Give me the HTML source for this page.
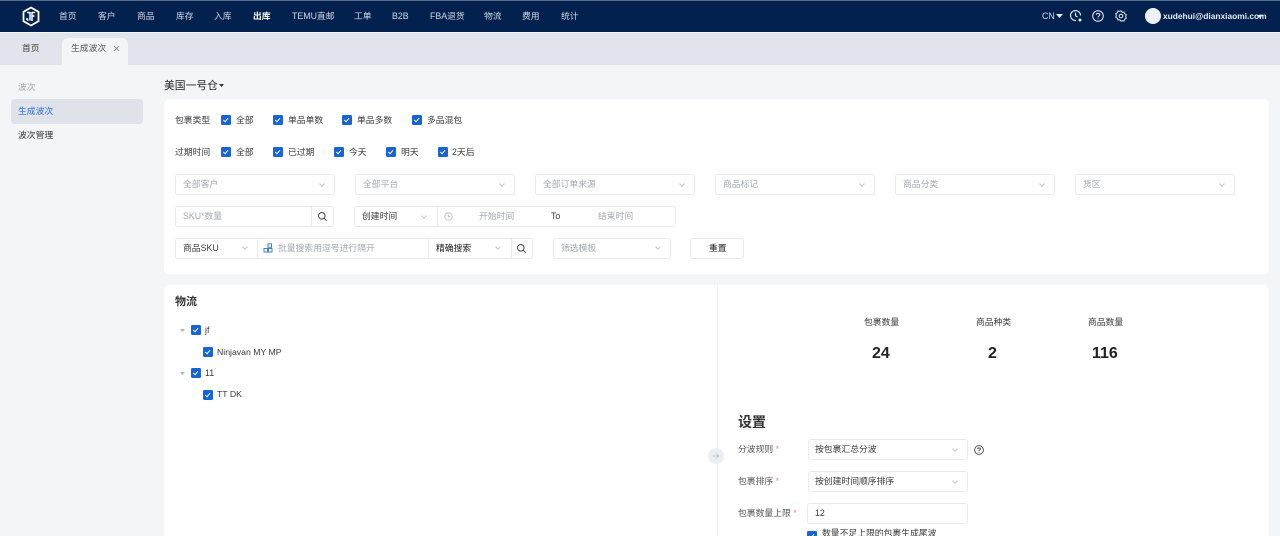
<!DOCTYPE html>
<html lang="zh">
<head>
<meta charset="utf-8">
<title>生成波次</title>
<style>
html{margin:0;padding:0;width:1280px;height:536px;overflow:hidden}
body{margin:0;padding:0;width:1280px;height:536px;overflow:hidden;position:relative;background:#f3f5f7;font-family:"Liberation Sans","Noto Sans CJK SC",sans-serif;font-size:8.8px;color:#3a3a3a}
div,span.a,svg{position:absolute}
.t{position:absolute;white-space:nowrap;line-height:14px;height:14px}
.n{color:#d3d9e4;top:9px}
.g{color:#a4a8ae}
.b{background:#fff;border:1px solid #e8eaee;border-radius:3px;box-sizing:border-box}
.c{width:10px;height:10px;background:#1664d9;border-radius:1.5px}
.c:after{content:"";position:absolute;left:3.4px;top:1.6px;width:2.2px;height:4.4px;border:solid #fff;border-width:0 1.1px 1.1px 0;transform:rotate(40deg)}
.v{width:3px;height:3px;border:solid #c2c5cb;border-width:0 1px 1px 0;transform:rotate(45deg)}
.l{background:#e8eaee;width:1px}
</style>
</head>
<body>
<!-- header -->
<div style="left:0;top:0;width:1280px;height:32px;background:#02214f"></div>
<div style="left:0;top:0;width:1280px;height:1px;background:#52688a"></div>
<svg style="left:21px;top:6px" width="20" height="21" viewBox="0 0 20 21"><path d="M10 1.500l7.500 4.300v9.400L10 19.500l-7.500-4.300V5.800z" fill="#02214f" stroke="#fff" stroke-width="1.800"/><path d="M9 6v8.500M6 6.500h3M6 14h1.500M6 14v-2M11 6v9M11 6.500h3.200M11 10h2.600" stroke="#fff" stroke-width="1.500" fill="none"/></svg>
<span class="t n" style="left:59px">首页</span>
<span class="t n" style="left:98px">客户</span>
<span class="t n" style="left:137px">商品</span>
<span class="t n" style="left:176px">库存</span>
<span class="t n" style="left:214px">入库</span>
<span class="t n" style="left:253px;color:#fff;font-weight:bold">出库</span>
<span class="t n" style="left:292px">TEMU直邮</span>
<span class="t n" style="left:354px">工单</span>
<span class="t n" style="left:392px">B2B</span>
<span class="t n" style="left:430px">FBA退货</span>
<span class="t n" style="left:484px">物流</span>
<span class="t n" style="left:522px">费用</span>
<span class="t n" style="left:561px">统计</span>
<span class="t n" style="left:1042px">CN</span>
<svg style="left:1056px;top:14px" width="8" height="5"><path d="M0 0h7L3.500 4z" fill="#e8ebf0"/></svg>
<svg style="left:1069px;top:9px" width="14" height="14" viewBox="0 0 14 14" fill="none" stroke="#e8ebf0" stroke-width="1.100"><path d="M11.500 6.500A5 5 0 1 0 7 11.500M6.500 3.500v3.200l2 1.300"/><circle cx="11" cy="11" r="1.500" fill="#e8ebf0" stroke="none"/></svg>
<svg style="left:1092px;top:10px" width="12" height="12" viewBox="0 0 12 12" fill="none" stroke="#e8ebf0"><circle cx="6" cy="6" r="5.300"/><path d="M4.300 4.800C4.300 2.900 7.800 2.900 7.800 4.800 7.800 6 6 6 6 7.300"/><path d="M6 8.300v1"/></svg>
<svg style="left:1115px;top:10px" width="12" height="12" viewBox="0 0 12 12" fill="none" stroke="#e8ebf0"><path d="M6 .8l1.200 1.400 1.800-.2.600 1.800 1.600.8-.5 1.900.5 1.900-1.600.8-.6 1.800-1.800-.2L6 11.200 4.800 9.800l-1.800.2-.6-1.800-1.600-.8.500-1.900-.5-1.900L2.400 2.800 3 1l1.800.2z"/><circle cx="6" cy="6" r="1.800"/></svg>
<div style="left:1145px;top:8px;width:16px;height:16px;border-radius:50%;background:#eef1f6"></div>
<span class="t" style="left:1163px;top:9px;color:#e8ebf0;font-size:8.400px;font-weight:bold">xudehui@dianxiaomi.com</span>
<svg style="left:1257px;top:15px" width="6" height="4"><path d="M0 0h6L3 3z" fill="#e8ebf0"/></svg>
<!-- tabs -->
<div style="left:0;top:33px;width:1280px;height:32px;background:#e1e4ec"></div>
<div style="left:62px;top:38px;width:66px;height:27px;background:#f3f5f7;border-radius:6px 6px 0 0"></div>
<span class="t" style="left:22px;top:41px;color:#444">首页</span>
<span class="t" style="left:71px;top:41px;color:#555">生成波次</span>
<svg style="left:113px;top:45px" width="7" height="7"><path d="M1 1l5 5M6 1L1 6" stroke="#777" stroke-width=".8"/></svg>
<!-- sidebar -->
<span class="t" style="left:18px;top:80px;color:#a4a8ae">波次</span>
<div style="left:11px;top:99px;width:132px;height:25px;background:#dfe2e9;border-radius:4px"></div>
<span class="t" style="left:18px;top:104px;color:#2f6fd6">生成波次</span>
<span class="t" style="left:18px;top:128px;color:#333">波次管理</span>
<!-- title -->
<span class="t" style="left:164px;top:79px;font-size:10.800px;color:#222">美国一号仓</span>
<svg style="left:219px;top:84px" width="6" height="4"><path d="M0 0h5L2.500 3z" fill="#333"/></svg>
<!-- filter card -->
<div style="left:164px;top:99px;width:1105px;height:175px;background:#fff;border-radius:5px"></div>
<span class="t" style="left:175px;top:113px">包裹类型</span>
<div class="c" style="left:221px;top:115px"></div><span class="t" style="left:236px;top:113px">全部</span>
<div class="c" style="left:273px;top:115px"></div><span class="t" style="left:288px;top:113px">单品单数</span>
<div class="c" style="left:342px;top:115px"></div><span class="t" style="left:357px;top:113px">单品多数</span>
<div class="c" style="left:412px;top:115px"></div><span class="t" style="left:427px;top:113px">多品混包</span>
<span class="t" style="left:175px;top:145px">过期时间</span>
<div class="c" style="left:221px;top:147px"></div><span class="t" style="left:236px;top:145px">全部</span>
<div class="c" style="left:273px;top:147px"></div><span class="t" style="left:288px;top:145px">已过期</span>
<div class="c" style="left:334px;top:147px"></div><span class="t" style="left:349px;top:145px">今天</span>
<div class="c" style="left:386px;top:147px"></div><span class="t" style="left:401px;top:145px">明天</span>
<div class="c" style="left:438px;top:147px"></div><span class="t" style="left:452px;top:145px">2天后</span>
<!-- row 3 -->
<div class="b" style="left:175px;top:174px;width:160px;height:21px"></div><span class="t g" style="left:183px;top:177px">全部客户</span><div class="v" style="left:320px;top:182px"></div>
<div class="b" style="left:355px;top:174px;width:160px;height:21px"></div><span class="t g" style="left:363px;top:177px">全部平台</span><div class="v" style="left:500px;top:182px"></div>
<div class="b" style="left:535px;top:174px;width:160px;height:21px"></div><span class="t g" style="left:543px;top:177px">全部订单来源</span><div class="v" style="left:680px;top:182px"></div>
<div class="b" style="left:715px;top:174px;width:160px;height:21px"></div><span class="t g" style="left:723px;top:177px">商品标记</span><div class="v" style="left:860px;top:182px"></div>
<div class="b" style="left:895px;top:174px;width:160px;height:21px"></div><span class="t g" style="left:903px;top:177px">商品分类</span><div class="v" style="left:1040px;top:182px"></div>
<div class="b" style="left:1075px;top:174px;width:160px;height:21px"></div><span class="t g" style="left:1083px;top:177px">货区</span><div class="v" style="left:1220px;top:182px"></div>
<!-- row 4 -->
<div class="b" style="left:175px;top:206px;width:159px;height:21px"></div><span class="t g" style="left:183px;top:209px">SKU*数量</span><div class="l" style="left:311px;top:207px;height:19px"></div>
<svg style="left:317px;top:211px" width="11" height="11" viewBox="0 0 11 11" fill="none" stroke="#444"><circle cx="4.800" cy="4.800" r="3.300"/><path d="M7.300 7.300l2.500 2.500"/></svg>
<div class="b" style="left:354px;top:206px;width:322px;height:21px"></div><span class="t" style="left:362px;top:209px">创建时间</span><div class="v" style="left:422px;top:214px"></div><div class="l" style="left:437px;top:207px;height:19px"></div>
<svg style="left:444px;top:212px" width="9" height="9" viewBox="0 0 9 9" fill="none" stroke="#b4b8bf" stroke-width=".8"><circle cx="4.500" cy="4.500" r="3.700"/><path d="M4.500 2.500v2.200h1.700"/></svg>
<span class="t g" style="left:479px;top:209px">开始时间</span>
<span class="t" style="left:551px;top:209px">To</span>
<span class="t g" style="left:598px;top:209px">结束时间</span>
<!-- row 5 -->
<div class="b" style="left:175px;top:238px;width:358px;height:21px"></div>
<span class="t" style="left:183px;top:241px">商品SKU</span><div class="v" style="left:243px;top:245px"></div><div class="l" style="left:257px;top:239px;height:19px"></div>
<svg style="left:263px;top:243px" width="10" height="10" viewBox="0 0 10 10" fill="none" stroke="#3f7fd8" stroke-width="1"><rect x="5" y=".8" width="3.500" height="3.500"/><rect x="1" y="5.500" width="3.500" height="3.500"/><rect x="5.500" y="5.500" width="3.500" height="3.500"/></svg>
<span class="t g" style="left:278px;top:241px">批量搜索用逗号进行隔开</span>
<div class="l" style="left:428px;top:239px;height:19px"></div>
<span class="t" style="left:436px;top:241px;color:#222">精确搜索</span><div class="v" style="left:496px;top:245px"></div><div class="l" style="left:511px;top:239px;height:19px"></div>
<svg style="left:516px;top:243px" width="11" height="11" viewBox="0 0 11 11" fill="none" stroke="#444"><circle cx="4.800" cy="4.800" r="3.300"/><path d="M7.300 7.300l2.500 2.500"/></svg>
<div class="b" style="left:553px;top:238px;width:118px;height:21px"></div><span class="t g" style="left:561px;top:241px">筛选模板</span><div class="v" style="left:656px;top:245px"></div>
<div class="b" style="left:690px;top:238px;width:54px;height:21px"></div><span class="t" style="left:709px;top:241px;color:#222">重置</span>
<!-- lower card -->
<div style="left:164px;top:285px;width:1105px;height:251px;background:#fff;border-radius:5px 5px 0 0"></div>
<div style="left:717px;top:285px;width:1px;height:251px;background:#eceef1"></div>
<span class="t" style="left:175px;top:295px;font-size:11px;font-weight:bold;color:#333">物流</span>
<svg style="left:180px;top:329px" width="6" height="4"><path d="M0 0h5L2.500 3z" fill="#b0b4ba"/></svg>
<div class="c" style="left:191px;top:325px"></div><span class="t" style="left:205px;top:323px">jf</span>
<div class="c" style="left:203px;top:347px"></div><span class="t" style="left:217px;top:345px;font-size:8.700px">Ninjavan MY MP</span>
<svg style="left:180px;top:372px" width="6" height="4"><path d="M0 0h5L2.500 3z" fill="#b0b4ba"/></svg>
<div class="c" style="left:191px;top:368px"></div><span class="t" style="left:205px;top:366px">11</span>
<div class="c" style="left:203px;top:390px"></div><span class="t" style="left:217px;top:387px;font-size:8.700px">TT DK</span>
<!-- stats -->
<span class="t" style="left:864px;top:315px">包裹数量</span>
<span class="t" style="left:976px;top:315px">商品种类</span>
<span class="t" style="left:1088px;top:315px">商品数量</span>
<span class="t" style="left:872px;top:345px;height:18px;line-height:18px;font-size:16px;font-weight:bold;color:#222">24</span>
<span class="t" style="left:988px;top:345px;height:18px;line-height:18px;font-size:16px;font-weight:bold;color:#222">2</span>
<span class="t" style="left:1092px;top:345px;height:18px;line-height:18px;font-size:16px;font-weight:bold;color:#222">116</span>
<!-- settings -->
<span class="t" style="left:738px;top:414px;height:16px;line-height:16px;font-size:14px;font-weight:bold;color:#333">设置</span>
<div style="left:708px;top:448px;width:16px;height:16px;border-radius:50%;background:#eceef1"></div>
<svg style="left:712px;top:452px" width="8" height="8"><path d="M.5 4h6M4 1.500L6.700 4 4 6.500" fill="none" stroke="#c4c7cc" stroke-width=".9"/></svg>
<span class="t" style="left:738px;top:442px;color:#555">分波规则 <span style="color:#e88">*</span></span>
<div class="b" style="left:808px;top:439px;width:160px;height:21px"></div><span class="t" style="left:815px;top:442px">按包裹汇总分波</span><div class="v" style="left:953px;top:447px"></div>
<svg style="left:974px;top:445px" width="10" height="10" viewBox="0 0 10 10" fill="none" stroke="#444" stroke-width=".9"><circle cx="5" cy="5" r="4.400"/><path d="M3.600 4C3.600 2.500 6.400 2.500 6.400 4 6.400 5 5 5 5 6"/><path d="M5 6.800v.9"/></svg>
<span class="t" style="left:738px;top:474px;color:#555">包裹排序 <span style="color:#e88">*</span></span>
<div class="b" style="left:808px;top:471px;width:160px;height:21px"></div><span class="t" style="left:815px;top:474px">按创建时间顺序排序</span><div class="v" style="left:953px;top:479px"></div>
<span class="t" style="left:738px;top:506px;color:#555">包裹数量上限 <span style="color:#e88">*</span></span>
<div class="b" style="left:807px;top:503px;width:161px;height:21px"></div><span class="t" style="left:815px;top:506px">12</span>
<div class="c" style="left:807px;top:531px"></div><span class="t" style="left:822px;top:526px">数量不足上限的包裹生成尾波</span>
</body>
</html>
